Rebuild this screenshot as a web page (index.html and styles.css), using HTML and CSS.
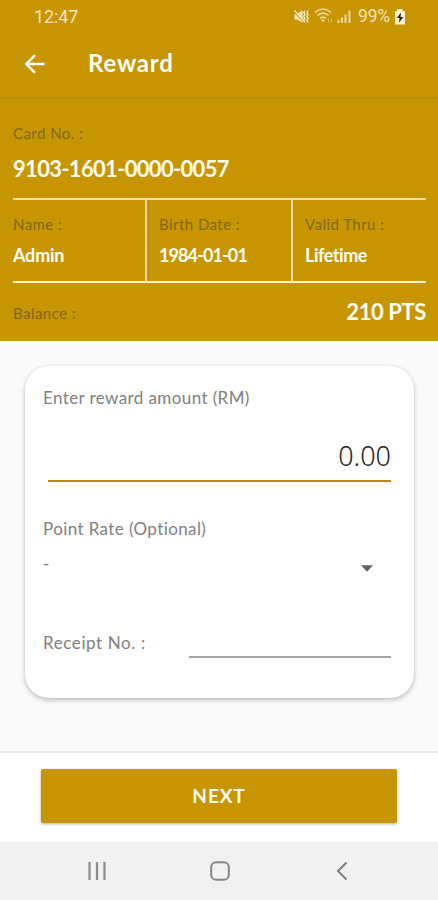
FILE: index.html
```html
<!DOCTYPE html>
<html lang="en">
<head>
<meta charset="utf-8">
<title>Reward</title>
<link rel="stylesheet" href="styles.css">
</head>
<body>
<div class="screen">
  <header class="top">
    <div class="status">
      <span class="clock">12:47</span>
      <svg class="status-icons" width="62" height="20" viewBox="0 0 62 20">
        <path d="M1.500 7h3l5-4v13l-5-3.500h-3z" fill="#f8e9c4"/>
        <path d="M11.800 3.500l-1 2 1 2-1 2 1 2-1 2 1 2M15 3.500l-1 2 1 2-1 2 1 2-1 2 1 2" fill="none" stroke="#f8e9c4" stroke-width="1.500"/>
        <path d="M1 4.800l9 9.500" stroke="#c79500" stroke-width="1.200"/>
        <path d="M1.500 3.500l9.500 10.500" stroke="#f8e9c4" stroke-width="1.500"/>
        <g fill="none" stroke="#f1dba5" stroke-width="1.600">
          <path d="M22 5.500q8-7 16 0M24.500 8.500q5.500-4.800 11 0M27 11.500q3-2.600 6 0"/>
        </g>
        <path d="M28 13q2-1.600 4 0l-2 2.500z" fill="#f1dba5"/>
        <path d="M35.500 11.500v4M38.500 11.500v4" stroke="#dfbd68" stroke-width="1.200"/>
        <path d="M45.500 13v3M49 10.500V16M52.500 7.500V16M56.500 3.500V16" stroke="#ecd291" stroke-width="2.200"/>
      </svg>
      <span class="percent">99%</span>
      <svg width="12" height="18" viewBox="0 0 12 18">
        <path d="M3.500 1h5v2H11v13.500H1V3h2.500z" fill="#fff3d6"/>
        <path d="M7 4.500L2.800 10h2.700L5 14.500 9.500 9H6.600z" fill="#2b2410"/>
      </svg>
    </div>
    <div class="toolbar">
      <svg width="22" height="22" viewBox="0 0 22 22" fill="none" stroke="#fff" stroke-width="2.400">
        <path d="M20.500 11H3M11 2.200L2.300 11 11 19.800"/>
      </svg>
      <h1 class="title">Reward</h1>
    </div>
  </header>

  <section class="member">
    <div class="label">Card No. :</div>
    <div class="card-no">9103-1601-0000-0057</div>
    <div class="facts">
      <div class="fact"><div class="label">Name :</div><div class="value value-name">Admin</div></div>
      <div class="fact"><div class="label">Birth Date :</div><div class="value value-date">1984-01-01</div></div>
      <div class="fact"><div class="label">Valid Thru :</div><div class="value value-valid">Lifetime</div></div>
    </div>
    <div class="balance">
      <div class="label">Balance :</div>
      <div class="points">210 PTS</div>
    </div>
  </section>

  <main class="content">
    <div class="form">
      <div class="field-label amount-label">Enter reward amount (RM)</div>
      <div class="amount">0.00</div>
      <div class="field-label rate-label">Point Rate (Optional)</div>
      <div class="select">
        <span>-</span>
        <svg width="12" height="7" viewBox="0 0 12 7"><path d="M0 .3h12L6 6.700z" fill="#656565"/></svg>
      </div>
      <div class="receipt">
        <div class="field-label receipt-label">Receipt No. :</div>
        <div class="receipt-input"></div>
      </div>
    </div>
  </main>

  <footer class="action">
    <button class="next">NEXT</button>
  </footer>

  <nav class="nav">
    <svg width="20" height="20" viewBox="0 0 20 20" stroke="#8c8c8c" stroke-width="2.200"><path d="M2.500 1v18M10 1v18M17.500 1v18"/></svg>
    <svg width="20" height="20" viewBox="0 0 20 20" fill="none" stroke="#858585" stroke-width="2"><rect x="1.200" y="1.200" width="17.600" height="17.600" rx="5"/></svg>
    <svg width="20" height="20" viewBox="0 0 20 20" fill="none" stroke="#808080" stroke-width="2"><path d="M14.500 1.500L6 10l8.500 8.500"/></svg>
  </nav>
</div>
</body>
</html>
```
FILE: styles.css
```css
* { box-sizing: border-box; }
body { margin: 0; font-family: Lato, "Liberation Sans", sans-serif; font-variant-ligatures: none; }
svg { display: block; flex: none; }
.screen { width: 438px; height: 900px; display: flex; flex-direction: column; background: #fafafa; overflow: hidden; white-space: nowrap; }

.top { height: 99px; background: #c79500; border-bottom: 2px solid #bd8e03; }
.status { height: 33px; display: flex; align-items: center; padding: 0 32px 0 34px; color: #f6e4b8; font: 18px/33px Roboto, sans-serif; }
.status-icons { margin-left: auto; }
.percent { width: 33px; margin: 0 3px 0 3px; font-size: 17.5px; letter-spacing: -0.2px; }
.clock { letter-spacing: -0.1px; }
.toolbar { height: 62px; display: flex; align-items: center; padding-left: 24px; }
.title { margin: 0 0 2px 42px; color: #fffdf5; font-size: 24px; line-height: 60px; font-weight: 700; letter-spacing: 0.8px; }

.member { height: 242px; padding: 24px 12px 0 13px; background: #c79500; }
.label { font-size: 15px; line-height: 20px; color: #80681f; letter-spacing: 0.45px; }
.card-no { margin-top: 12px; height: 43px; color: #fffdf5; font-size: 22px; line-height: 28px; font-weight: 700; letter-spacing: -0.68px; }
.facts { display: grid; grid-template-columns: 132px 146px 135px; height: 85px; border-top: 2px solid #f3dfaa; border-bottom: 2px solid #fdf1ce; }
.fact { padding-top: 14px; }
.fact + .fact { padding-left: 12px; border-left: 2px solid #f0d898; }
.value { margin-top: 10px; color: #fffdf5; font-size: 18px; line-height: 22px; font-weight: 700; }
.value-name { letter-spacing: -0.2px; }
.value-date { letter-spacing: -0.9px; }
.value-valid { letter-spacing: -0.45px; }
.balance { display: flex; justify-content: space-between; padding-top: 15px; }
.balance .label { padding-top: 5px; }
.points { color: #fffdf5; font-size: 22px; line-height: 28px; font-weight: 700; letter-spacing: -0.4px; }

.content { height: 410px; padding: 25px 24px 0 25px; }
.form { height: 332px; padding: 20px 23px 0 18px; border-radius: 24px; background: #fff; box-shadow: 0 2px 5px rgba(0, 0, 0, 0.24), 0 0 2px rgba(0, 0, 0, 0.08); }
.field-label { font-size: 17px; line-height: 24px; color: #808080; letter-spacing: 0.4px; }
.amount { height: 54px; margin: 18px 0 0 5px; padding-top: 10px; border-bottom: 2px solid #bb8b16; color: #222; font-family: "Noto Sans", sans-serif; font-weight: 300; font-size: 27px; line-height: 36px; text-align: right; }
.rate-label { margin-top: 35px; }
.select { display: flex; align-items: center; justify-content: space-between; height: 30px; margin-top: 12px; margin-right: 18px; color: #777; font-size: 17px; line-height: 24px; }
.select span { padding-bottom: 9px; }
.select svg { margin-top: 1px; }
.receipt { display: flex; height: 51px; margin-top: 24px; justify-content: space-between; }
.receipt-label { padding-top: 24px; letter-spacing: 0.6px; }
.receipt-input { width: 202px; border-bottom: 2px solid #a4a4a4; }

.action { height: 91px; padding: 16px 41px 0; border-top: 2px solid #e9e9e9; background: #fff; }
.next { display: block; width: 100%; height: 54px; padding: 0; border: 0; border-radius: 2px; background: #c79500; color: #fffdf5; font: 700 19px/54px Lato, sans-serif; letter-spacing: 0.9px; box-shadow: 0 1px 3px rgba(0, 0, 0, 0.32); }
.nav { height: 58px; display: flex; align-items: center; justify-content: space-between; padding: 0 86px 0 87px; background: #f1f1f1; }
```
